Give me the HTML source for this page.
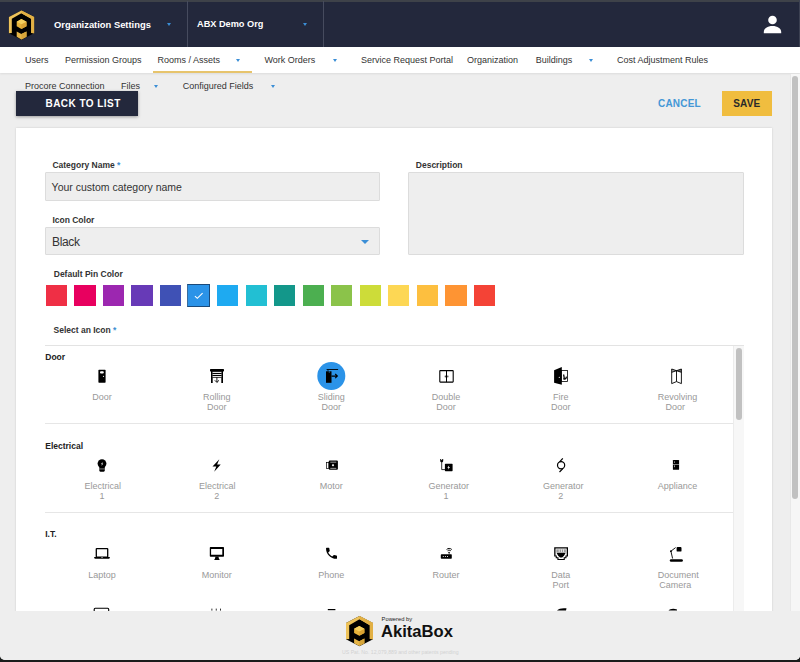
<!DOCTYPE html>
<html><head><meta charset="utf-8">
<style>
*{margin:0;padding:0;box-sizing:border-box}
html,body{width:800px;height:662px;overflow:hidden;background:#1a1d1c;}
body{font-family:"Liberation Sans",sans-serif;position:relative;}
.win{position:absolute;left:0;top:0;width:800px;height:660px;background:#eeeeee;border-radius:0 0 5px 5px;overflow:hidden}
.t{position:absolute;white-space:nowrap;line-height:1}
.hdr{position:absolute;left:0;top:0;width:800px;height:47px;background:#23283c}
.topstrip{position:absolute;left:0;top:0;width:800px;height:1.5px;background:#3e4249}
.hdiv{position:absolute;top:1px;width:1px;height:46px;background:#464b5e}
.harr{position:absolute;width:0;height:0;border-left:2.5px solid transparent;border-right:2.5px solid transparent;border-top:3px solid #3b8ed6}
.nav{position:absolute;left:0;top:47px;width:800px;height:26px;background:#fff;box-shadow:0 1px 2px rgba(0,0,0,0.08)}
.nt{color:#333;font-size:9px}
.narr{position:absolute;width:0;height:0;border-left:2.5px solid transparent;border-right:2.5px solid transparent;border-top:3px solid #3b8ed6}
.card{position:absolute;left:16px;top:128px;width:756px;height:500px;background:#fff;box-shadow:0 0 2px rgba(0,0,0,0.15)}
.lbl{font-size:8.5px;font-weight:bold;color:#333}
.inp{position:absolute;background:#eeeeee;border:1px solid #dcdcdc;border-radius:1px}
.sw{position:absolute;top:285px;width:21.2px;height:21px}
.sec{font-size:8.5px;font-weight:bold;color:#222}
.il{font-size:9px;color:#999;text-align:center;line-height:10px;width:35.2px;white-space:normal}
.sep{position:absolute;left:45px;width:688px;height:1px;background:#e6e6e6}
.ic{position:absolute}
</style></head><body>
<div class="win">
  <!-- header -->
  <div class="hdr"></div>
  <div class="topstrip"></div>
  <div style="position:absolute;left:799px;top:0;width:1px;height:47px;background:#3c4152"></div>
  <svg style="position:absolute;left:0;top:0" width="50" height="47" viewBox="0 0 50 47">
    <polygon points="21.4,10.4 34.1,17 34.1,33.3 21.4,39.8 8.9,33.3 8.9,17" fill="#000"/>
    <polygon points="8.9,17 21.4,10.4 34.1,17 34.1,33.3 31.2,33 31.2,18.8 21.4,13.2 11.8,18.8 11.8,33 8.9,33.3" fill="#eec35a"/>
    <polygon points="21.4,10.4 34.1,17 34.1,33.3 31.2,33 31.2,18.8 21.4,13.2" fill="#e2b044"/>
    <polygon points="21.4,19 26.5,21.8 26.5,26.2 21.4,28.9 16.7,26.2 16.7,21.8" fill="#e6b23a"/>
    <polygon points="21.4,23.9 26.5,21.8 26.5,26.2 21.4,28.9" fill="#d9a232"/>
    <polygon points="21.4,19 26.5,21.8 21.4,24.2 16.7,21.8" fill="#f4cf5e"/>
    <polygon points="16.7,31.6 21.4,34.1 26.5,31.6 26.5,36.8 21.4,39.5 16.7,36.8" fill="#e6b548"/>
    <polygon points="21.4,34.1 26.5,31.6 26.5,36.8 21.4,39.5" fill="#d6a53a"/>
  </svg>
  <div class="t" style="left:54px;top:19.8px;font-size:9.4px;font-weight:bold;color:#fff">Organization Settings</div>
  <div class="harr" style="left:167px;top:23px"></div>
  <div class="hdiv" style="left:187px"></div>
  <div class="t" style="left:197px;top:20.3px;font-size:9.2px;font-weight:bold;color:#fff">ABX Demo Org</div>
  <div class="harr" style="left:303px;top:23px"></div>
  <div class="hdiv" style="left:323px"></div>
  <svg style="position:absolute;left:760px;top:12px" width="26" height="24" viewBox="0 0 26 24">
    <circle cx="12.5" cy="8" r="4.3" fill="#fff"/>
    <path d="M3.8 21.2 V20 C3.8 16.5 7.5 14 12.5 14 C17.5 14 21.2 16.5 21.2 20 V21.2 Z" fill="#fff"/>
  </svg>

  <!-- nav -->
  <div class="nav"></div>
  <div style="position:absolute;left:153px;top:70.6px;width:99px;height:2.5px;background:#e7c46c"></div>
  <div class="t nt" style="left:25px;top:56px">Users</div>
  <div class="t nt" style="left:65px;top:56px">Permission Groups</div>
  <div class="t nt" style="left:157.5px;top:56px">Rooms / Assets</div>
  <div class="narr" style="left:236px;top:59px"></div>
  <div class="t nt" style="left:264.5px;top:56px">Work Orders</div>
  <div class="narr" style="left:333px;top:59px"></div>
  <div class="t nt" style="left:361px;top:56px">Service Request Portal</div>
  <div class="t nt" style="left:467px;top:56px">Organization</div>
  <div class="t nt" style="left:535.7px;top:56px">Buildings</div>
  <div class="narr" style="left:588.5px;top:59px"></div>
  <div class="t nt" style="left:617px;top:56px">Cost Adjustment Rules</div>
  <div class="t nt" style="left:25px;top:82.2px">Procore Connection</div>
  <div class="t nt" style="left:121px;top:82.2px">Files</div>
  <div class="narr" style="left:154px;top:85px"></div>
  <div class="t nt" style="left:182.7px;top:82.2px">Configured Fields</div>
  <div class="narr" style="left:270.5px;top:85px"></div>

  <!-- scrollbar -->
  <div style="position:absolute;left:790px;top:74px;width:10px;height:586px;background:#f6f6f6;border-left:1px solid #e8e8e8"></div>
  <div style="position:absolute;left:792px;top:76px;width:6px;height:423px;background:#c1c1c1;border-radius:3px"></div>

  <!-- buttons -->
  <div style="position:absolute;left:16px;top:91px;width:122px;height:25px;background:#23283c;box-shadow:0 1px 3px rgba(0,0,0,0.35)"></div>
  <div class="t" style="left:45.5px;top:98.9px;font-size:10px;font-weight:bold;color:#fff;letter-spacing:0.45px">BACK TO LIST</div>
  <div class="t" style="left:658px;top:98.9px;font-size:10px;font-weight:bold;color:#4497d6;letter-spacing:0.2px">CANCEL</div>
  <div style="position:absolute;left:722px;top:91px;width:50px;height:25px;background:#f0bd3f"></div>
  <div class="t" style="left:733.2px;top:98.9px;font-size:10px;font-weight:bold;color:#2a2a2a;letter-spacing:0.2px">SAVE</div>

  <!-- card -->
  <div class="card"></div>
  <div class="t lbl" style="left:52.4px;top:160.9px">Category Name <span style="color:#3d8fd1">*</span></div>
  <div class="inp" style="left:45px;top:172px;width:335px;height:29px"></div>
  <div class="t" style="left:51.6px;top:181.6px;font-size:10.5px;color:#333">Your custom category name</div>
  <div class="t lbl" style="left:52.4px;top:215.5px">Icon Color</div>
  <div class="inp" style="left:45px;top:227px;width:335px;height:28px"></div>
  <div class="t" style="left:52px;top:235.9px;font-size:12px;color:#333;letter-spacing:-0.35px">Black</div>
  <div style="position:absolute;left:361px;top:240px;width:0;height:0;border-left:4px solid transparent;border-right:4px solid transparent;border-top:4.5px solid #3b8ed6"></div>
  <div class="t lbl" style="left:415.8px;top:160.9px">Description</div>
  <div class="inp" style="left:408px;top:172px;width:336px;height:83px"></div>

  <div class="t lbl" style="left:53.75px;top:270.3px">Default Pin Color</div>
  <div class="sw" style="left:45.90px;background:#ef2f45"></div>
  <div class="sw" style="left:74.43px;background:#e8005f"></div>
  <div class="sw" style="left:102.96px;background:#9c27b0"></div>
  <div class="sw" style="left:131.49px;background:#673ab7"></div>
  <div class="sw" style="left:160.02px;background:#3f51b5"></div>
  <div style="position:absolute;left:187.3px;top:284px;width:22.8px;height:22.8px;background:#2b93e8;border:1px solid #1b4a7a;border-left-color:#3a6d9e"><svg width="21" height="21" viewBox="0 0 21 21" style="position:absolute;left:0;top:0"><path d="M6.9 11.2 L9.3 13.3 L14.6 8.2" stroke="#fff" stroke-width="1.1" fill="none"/></svg></div>
  <div class="sw" style="left:217.08px;background:#1eaaf1"></div>
  <div class="sw" style="left:245.61px;background:#22bfd3"></div>
  <div class="sw" style="left:274.14px;background:#13978a"></div>
  <div class="sw" style="left:302.67px;background:#4caf50"></div>
  <div class="sw" style="left:331.20px;background:#8bc34a"></div>
  <div class="sw" style="left:359.73px;background:#cddc39"></div>
  <div class="sw" style="left:388.26px;background:#fdd754"></div>
  <div class="sw" style="left:416.79px;background:#fdbf3f"></div>
  <div class="sw" style="left:445.32px;background:#fe9433"></div>
  <div class="sw" style="left:473.85px;background:#f44336"></div>

  <div class="t lbl" style="left:53.5px;top:325.9px">Select an Icon <span style="color:#3d8fd1">*</span></div>

  <!-- icon list -->
  <div style="position:absolute;left:45px;top:345px;width:699px;height:1px;background:#e3e3e3"></div>
  <div style="position:absolute;left:733px;top:346px;width:11px;height:270px;background:#f7f7f7;border-left:1px solid #ececec"></div>
  <div style="position:absolute;left:736px;top:348px;width:5.5px;height:72px;background:#c1c1c1;border-radius:3px"></div>

  <!--ICONS-->
<div class="sep" style="top:423px"></div>
<div class="sep" style="top:511.5px"></div>
<div class="t sec" style="left:45.25px;top:352.65px">Door</div>
<div class="t sec" style="left:45.25px;top:441.60px">Electrical</div>
<div class="t sec" style="left:45.25px;top:530.30px">I.T.</div>
<div class="t il" style="left:84.40px;top:392.30px">Door</div>
<div class="t il" style="left:84.40px;top:481.30px">Electrical<br>1</div>
<div class="t il" style="left:84.40px;top:569.80px">Laptop</div>
<div class="t il" style="left:199.10px;top:392.30px">Rolling<br>Door</div>
<div class="t il" style="left:199.10px;top:481.30px">Electrical<br>2</div>
<div class="t il" style="left:199.10px;top:569.80px">Monitor</div>
<div class="t il" style="left:313.70px;top:392.30px">Sliding<br>Door</div>
<div class="t il" style="left:313.70px;top:481.30px">Motor</div>
<div class="t il" style="left:313.70px;top:569.80px">Phone</div>
<div class="t il" style="left:428.40px;top:392.30px">Double<br>Door</div>
<div class="t il" style="left:428.40px;top:481.30px">Generator<br>1</div>
<div class="t il" style="left:428.40px;top:569.80px">Router</div>
<div class="t il" style="left:543.10px;top:392.30px">Fire<br>Door</div>
<div class="t il" style="left:543.10px;top:481.30px">Generator<br>2</div>
<div class="t il" style="left:543.10px;top:569.80px">Data<br>Port</div>
<div class="t il" style="left:657.70px;top:392.30px">Revolving<br>Door</div>
<div class="t il" style="left:657.70px;top:481.30px">Appliance</div>
<div class="t il" style="left:657.70px;top:569.80px">Document<br>Camera</div>
<svg style="position:absolute;left:0;top:0" width="800" height="662" viewBox="0 0 800 662">
<defs><clipPath id="lc"><rect x="45" y="346" width="688" height="265"/></clipPath></defs>
<g clip-path="url(#lc)">
<!-- Door -->
<rect x="98.4" y="369.8" width="7.2" height="12.9" rx="0.6" fill="#000"/>
<rect x="100" y="371.3" width="3.8" height="2.2" rx="1" fill="#fff"/>
<circle cx="103.5" cy="376.3" r="0.6" fill="#fff"/>
<!-- Rolling door -->
<rect x="210" y="369" width="14" height="2.4" rx="0.6" fill="#000"/>
<rect x="211" y="370.5" width="1.7" height="12.5" fill="#000"/>
<rect x="221.3" y="370.5" width="1.7" height="12.5" fill="#000"/>
<rect x="212.5" y="371.3" width="9" height="6.4" fill="#000"/>
<rect x="212.6" y="372.1" width="8.8" height="0.9" fill="#fff"/>
<rect x="212.6" y="374.1" width="8.8" height="0.9" fill="#fff"/>
<rect x="212.6" y="376.1" width="8.8" height="0.9" fill="#fff"/>
<path d="M216.9 377.2 V382.3 M214.8 380.3 L216.9 382.4 L219 380.3" stroke="#000" stroke-width="0.9" fill="none"/>
<!-- Sliding door selected -->
<circle cx="331.3" cy="376" r="14" fill="#2b93e8"/>
<rect x="326" y="371.3" width="5.5" height="11.5" fill="#000"/>
<rect x="326.6" y="369" width="11.5" height="0.9" fill="#000"/>
<rect x="327.6" y="369.9" width="0.8" height="1.4" fill="#000"/>
<path d="M331.5 376.1 H337.2 M335.2 374 L337.4 376.1 L335.2 378.2" stroke="#000" stroke-width="1.1" fill="none"/>
<circle cx="329.3" cy="372" r="0.6" fill="#2b93e8"/>
<!-- Double door -->
<rect x="439.8" y="370.6" width="13.4" height="11.5" rx="0.5" stroke="#000" stroke-width="1.1" fill="none"/>
<rect x="446" y="370.6" width="1" height="11.5" fill="#000"/>
<rect x="444.8" y="375.4" width="0.9" height="2.1" rx="0.4" fill="#000"/>
<rect x="447.4" y="375.4" width="0.9" height="2.1" rx="0.4" fill="#000"/>
<!-- Fire door -->
<rect x="561.3" y="370.4" width="6.2" height="11" stroke="#000" stroke-width="0.8" fill="none"/>
<polygon points="554.1,370.2 561.8,367 561.8,384.8 554.1,382.7" fill="#000"/>
<circle cx="559.3" cy="377.3" r="0.6" fill="#fff"/>
<path d="M563.9 374.5 C563.2 376 564.9 376.9 563.9 378.8 C565.4 379.4 566.6 378.3 566.2 376.6" stroke="#000" stroke-width="1.3" fill="none"/>
<!-- Revolving door -->
<path d="M671.7 369 V383.6 M681.4 369 V383.6 M676.5 370.5 V381.6 M671.7 383.6 L676.5 381.6 L681.4 383.6 M671.7 369 L676.5 370.7 L681.4 369 M671.7 372.3 L676.5 370.7 L681.4 372.3" stroke="#000" stroke-width="0.9" fill="none"/>
<polygon points="671.7,369 676.5,370.7 671.7,372.3" fill="#000" opacity="0.35"/>
<polygon points="681.4,369 676.5,370.7 681.4,372.3" fill="#000" opacity="0.6"/>
<!-- Bulb -->
<circle cx="102" cy="463.6" r="4.4" fill="#000"/>
<rect x="99.3" y="466.5" width="5.5" height="5.2" rx="1.1" fill="#000"/>
<rect x="99.3" y="468.6" width="5.5" height="0.7" fill="#bbb"/>
<polygon points="102.6,461.8 101,464.3 102.1,464.3 101.5,466 103.2,463.5 102.1,463.5" fill="#fff"/>
<!-- Bolt -->
<polygon points="219.3,459.2 212.5,466.4 216.3,466.4 214.2,471.7 220.7,464.5 217.1,464.5" fill="#000"/>
<!-- Motor -->
<rect x="328.8" y="460.5" width="9.1" height="9.3" rx="1" fill="#000"/>
<rect x="330.3" y="461.8" width="6" height="0.6" fill="#fff"/>
<rect x="330.3" y="467.9" width="6" height="0.6" fill="#fff"/>
<polygon points="333,463.8 334.2,465.2 333,466.6 331.8,465.2" fill="#fff"/>
<rect x="326.4" y="462.4" width="2.4" height="6" stroke="#000" stroke-width="0.7" fill="none"/>
<!-- Generator 1 -->
<path d="M440.2 459 V460.8 C440.2 461.8 441 462.3 441.7 462.3 C442.4 462.3 443.2 461.8 443.2 460.8 V459 Z" fill="#000"/>
<rect x="441.2" y="459" width="1" height="1.1" fill="#fff"/>
<path d="M441.7 462 V469.6 H445" stroke="#000" stroke-width="0.8" fill="none"/>
<rect x="444.9" y="463.8" width="7.7" height="7.4" rx="0.6" fill="#000"/>
<polygon points="449.2,465.3 447.3,467.8 448.5,467.8 447.9,469.8 450,467.1 448.8,467.1" fill="#fff"/>
<!-- Generator 2 -->
<circle cx="561.1" cy="465.3" r="3.6" stroke="#000" stroke-width="1.2" fill="none"/>
<path d="M559.6 461.8 L562.8 458.3 M562.6 468.9 L559.5 472" stroke="#000" stroke-width="1.2" fill="none"/>
<!-- Appliance -->
<rect x="672.9" y="460" width="6.2" height="9.8" rx="0.6" fill="#000"/>
<rect x="672.9" y="464.1" width="6.2" height="0.5" fill="#fff"/>
<rect x="674.1" y="461.4" width="0.6" height="1.4" fill="#fff"/>
<rect x="674.1" y="465.4" width="0.6" height="1.8" fill="#fff"/>
<!-- Laptop -->
<rect x="96.3" y="548.6" width="11.4" height="8.5" rx="0.5" stroke="#000" stroke-width="1.3" fill="none"/>
<path d="M94.2 557 H109.8 V557.8 C109.8 558.3 109.3 558.7 108.8 558.7 H95.2 C94.7 558.7 94.2 558.3 94.2 557.8 Z" fill="#000"/>
<rect x="101.3" y="557.2" width="1.5" height="0.6" fill="#fff"/>
<!-- Monitor -->
<path d="M210.5 547 H223.3 C223.7 547 224 547.3 224 547.7 V556 C224 556.4 223.7 556.7 223.3 556.7 H210.5 C210.1 556.7 209.8 556.4 209.8 556 V547.7 C209.8 547.3 210.1 547 210.5 547 Z M211.1 548.9 V554.8 H222.3 V548.9 Z" fill="#000" fill-rule="evenodd"/>
<polygon points="215.5,556.6 218.4,556.6 219,558.8 219.8,559.9 214.1,559.9 214.9,558.8" fill="#000"/>
<!-- Phone -->
<g transform="translate(324.17 545.97) scale(0.611)"><path d="M6.62 10.79c1.44 2.83 3.76 5.14 6.59 6.59l2.2-2.2c.27-.27.67-.36 1.02-.24 1.12.37 2.33.57 3.57.57.55 0 1 .45 1 1V20c0 .55-.45 1-1 1-9.39 0-17-7.610-17-17 0-.55.45-1 1-1h3.5c.55 0 1 .45 1 1 0 1.25.2 2.45.57 3.57.11.35.03.74-.25 1.020l-2.2 2.2z" fill="#000"/></g>
<!-- Router -->
<rect x="440.8" y="554.2" width="11" height="4.6" rx="0.7" fill="#000"/>
<circle cx="443.3" cy="556.5" r="0.55" fill="#fff"/>
<circle cx="445.4" cy="556.5" r="0.55" fill="#fff"/>
<circle cx="447.5" cy="556.5" r="0.55" fill="#fff"/>
<rect x="448.75" y="552" width="0.7" height="2.4" fill="#000"/>
<circle cx="449" cy="552.4" r="0.7" fill="#000"/>
<path d="M446.6 549.5 C447.9 548.1 450.5 548.1 451.8 549.5 M447.6 550.8 C448.5 550 449.9 550 450.8 550.8" stroke="#000" stroke-width="1" fill="none"/>
<!-- Data port -->
<path d="M554.2 547.2 H568 V556.5 H566.5 V558.2 H564.8 V559.9 H557.4 V558.2 H555.7 V556.5 H554.2 Z M555.5 548.6 V555.6 H556.8 V557.3 H558.5 V559 H563.7 V557.3 H565.4 V555.6 H566.7 V548.6 Z" fill="#000" fill-rule="evenodd"/>
<rect x="556.3" y="549.3" width="9.6" height="3" fill="#999"/>
<rect x="558.8" y="549.3" width="0.7" height="3" fill="#fff"/>
<rect x="561" y="549.3" width="0.7" height="3" fill="#fff"/>
<rect x="563.2" y="549.3" width="0.7" height="3" fill="#fff"/>
<polygon points="556.5,552.7 565.7,552.7 564,555.8 562.2,557.5 560,557.5 558.2,555.8" fill="#000"/>
<!-- Lamp -->
<rect x="669.8" y="559.2" width="13.1" height="2.6" rx="1.3" fill="#000"/>
<path d="M672.6 558.5 L670.9 551.2 L675.6 547.6" stroke="#000" stroke-width="0.9" fill="none"/>
<circle cx="670.9" cy="551.2" r="0.9" fill="#000"/>
<rect x="676.6" y="547" width="4.9" height="4.6" rx="0.9" fill="#000"/>
<!-- partial next row -->
<rect x="94.2" y="608.2" width="14.5" height="5" rx="1" stroke="#000" stroke-width="1.1" fill="none"/>
<rect x="211.5" y="608.6" width="0.8" height="2" fill="#000"/>
<rect x="215.8" y="608.6" width="0.8" height="2" fill="#000"/>
<rect x="220.2" y="608.6" width="0.8" height="2" fill="#000"/>
<rect x="327.8" y="609" width="7.6" height="1.2" fill="#000"/>
<path d="M557 610.5 C559 608.5 562 607.8 566.5 608.3 L566 610.5 Z" fill="#000"/>
<path d="M668.5 610.5 C670 609 673 608 677 609.5 L677 610.5 Z" fill="#000"/>
</g></svg>
<!--/ICONS-->

  <!-- footer -->
  <div style="position:absolute;left:0;top:611px;width:800px;height:49px;background:#eeeeee;box-shadow:0 -0.5px 1px rgba(0,0,0,0.04)"></div>
  <svg style="position:absolute;left:340px;top:612px" width="40" height="38" viewBox="0 0 40 38">
    <g transform="translate(6,4)">
    <polygon points="13.5,0 27,7 27,23.2 13.5,30.2 0,23.2 0,7" fill="#000"/>
    <polygon points="0,7 13.5,0 27,7 27,23.2 23.8,23 23.8,9.2 13.5,3.3 3.2,9.2 3.2,23 0,23.2" fill="#eec35a"/>
    <polygon points="13.5,0 27,7 27,23.2 23.8,23 23.8,9.2 13.5,3.3" fill="#e2b044"/>
    <polygon points="13.3,9.9 18.4,12.7 18.4,17 13.3,19.8 8.1,17 8.1,12.7" fill="#e6b23a"/>
    <polygon points="13.3,15.2 18.4,12.7 18.4,17 13.3,19.8" fill="#d9a232"/>
    <polygon points="13.3,9.9 18.4,12.7 13.3,15.4 8.1,12.7" fill="#f4cf5e"/>
    <polygon points="8.1,22.6 13.3,25.3 18.4,22.6 18.4,27.3 13.3,30 8.1,27.3" fill="#e6b548"/>
    <polygon points="13.3,25.3 18.4,22.6 18.4,27.3 13.3,30" fill="#d6a53a"/>
    </g>
  </svg>
  <div class="t" style="left:381.6px;top:617.2px;font-size:5.8px;color:#222">Powered by</div>
  <div class="t" style="left:381px;top:624.2px;font-size:16.6px;font-weight:bold;color:#111">AkitaBox</div>
  <div class="t" style="left:342px;top:649.6px;font-size:5.2px;color:#d2d2d2">US Pat. No. 12,079,889 and other patents pending</div>
</div>
</body></html>
